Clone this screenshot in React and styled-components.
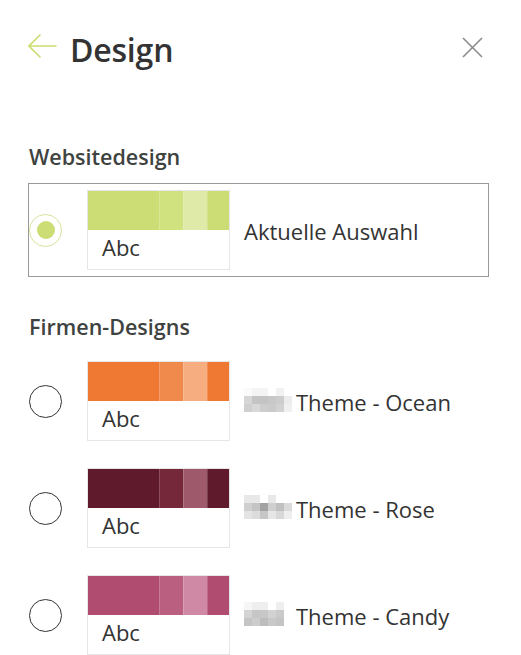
import React from "react";
import styled, { createGlobalStyle } from "styled-components";

const GlobalStyle = createGlobalStyle`
    body {
        margin: 0;
        background: #fff;
        font-family: "Open Sans", "Noto Sans", sans-serif;
        color: #333;
    }
`;

const Panel = styled.div`
    width: 521px;
    height: 655px;
    overflow: hidden;
    padding: 0 32px 0 28px;
    box-sizing: border-box;
`;

const Header = styled.div`
    display: flex;
    align-items: center;
    height: 102px;
    padding-bottom: 4px;
    box-sizing: border-box;
`;

const IconButton = styled.button`
    border: none;
    background: none;
    padding: 0;
    display: flex;
    cursor: pointer;
    margin-bottom: ${(p) => p.$lift || 0}px;
    margin-right: ${(p) => p.$inset || 0}px;
`;

const Title = styled.h1`
    flex: 1;
    margin: 0 0 0 13px;
    font-size: 32px;
    font-weight: 600;
    color: #333;
    letter-spacing: -0.2px;
`;

const SectionLabel = styled.h2`
    margin: 0 0 ${(p) => p.$gap}px 1px;
    font-size: 21.5px;
    font-weight: 600;
    color: #3f433f;
    line-height: 28px;
`;

const Section = styled.section`
    margin-top: ${(p) => p.$top}px;
`;

const List = styled.div`
    display: flex;
    flex-direction: column;
    gap: 13px;
`;

const Row = styled.div`
    display: flex;
    align-items: center;
    height: 94px;
    box-sizing: border-box;
    border: 1px solid ${(p) => (p.$selected ? "#999" : "transparent")};
`;

const Radio = styled.span`
    width: 33px;
    height: 33px;
    box-sizing: border-box;
    border-radius: 50%;
    border: 1px solid ${(p) => (p.$checked ? "#d5e39b" : "#333")};
    display: flex;
    align-items: center;
    justify-content: center;
    flex-shrink: 0;

    &::after {
        content: "";
        display: ${(p) => (p.$checked ? "block" : "none")};
        width: 18px;
        height: 18px;
        border-radius: 50%;
        background: #cbdd74;
    }
`;

const Thumb = styled.div`
    margin-left: 25px;
    width: 143px;
    height: 80px;
    box-sizing: border-box;
    border: 1px solid #e6e6e6;
    display: flex;
    flex-direction: column;
    flex-shrink: 0;
`;

const Band = styled.div`
    display: grid;
    grid-template-columns: 71px 24px 24px 1fr;
    height: 39px;
`;

const Swatch = styled.div`
    background: ${(p) => p.$color};
    & + & {
        border-left: 1px solid rgba(255, 255, 255, 0.18);
    }
`;

const Abc = styled.div`
    padding: 2px 0 0 14px;
    font-size: 22px;
    color: #333;
    line-height: 30px;
`;

const Name = styled.div`
    margin-left: 14px;
    padding-top: 1px;
    display: flex;
    align-items: center;
    font-size: 22px;
    color: #333;
    white-space: nowrap;
`;

const Mosaic = styled.span`
    display: grid;
    grid-template-columns: repeat(6, 8px);
    grid-auto-rows: 8px;
    margin-right: 4px;
    margin-top: -4px;
`;

const Cell = styled.span`
    background: ${(p) => p.$shade};
`;

const themes = [
    {
        name: "Theme - Ocean",
        colors: ["#ef7932", "#f08a4c", "#f6ad80", "#ef7932"],
        blur: [
            "#fafafa", "#f4f4f4", "#f4f4f4", "#fff", "#f2f2f2", "#fff",
            "#d6d6d6", "#c4c4c4", "#c4c4c4", "#c8c8c8", "#cdcdcd", "#ececec",
            "#cfcfcf", "#d8d8d8", "#cdcdcd", "#cbcbcb", "#d2d2d2", "#f0f0f0",
        ],
    },
    {
        name: "Theme - Rose",
        colors: ["#5f1a2b", "#74283a", "#9e5a6a", "#5f1a2b"],
        blur: [
            "#e8e8e8", "#e8e8e8", "#fff", "#e8e8e8", "#fff", "#fff",
            "#cfcfcf", "#c4c4c4", "#a2a2a2", "#cfcfcf", "#c0c0c0", "#dadada",
            "#e4e4e4", "#dcdcdc", "#c6c6c6", "#e6e6e6", "#d8d8d8", "#eeeeee",
        ],
    },
    {
        name: "Theme - Candy",
        colors: ["#b04c70", "#bb5f80", "#d089a5", "#b04c70"],
        blur: [
            "#f6f6f6", "#eeeeee", "#eeeeee", "#fff", "#eeeeee", "#fff",
            "#d4d4d4", "#c6c6c6", "#c8c8c8", "#d2d2d2", "#cacaca", "#fff",
            "#c4c4c4", "#cdcdcd", "#bdbdbd", "#c8c8c8", "#c4c4c4", "#fff",
        ],
    },
];

function ThemeThumb({ colors }) {
    return (
        <Thumb>
            <Band>
                {colors.map((c, i) => (
                    <Swatch key={i} $color={c} />
                ))}
            </Band>
            <Abc>Abc</Abc>
        </Thumb>
    );
}

function App() {
    return (
        <Panel>
            <GlobalStyle />
            <Header>
                <IconButton aria-label="Zurück" $lift={6}>
                    <svg width="29" height="26" viewBox="0 0 29 26">
                        <path
                            d="M12.5 1.5 L1 13 L12.5 24.5 M1 13 H28.5"
                            fill="none"
                            stroke="#c9de72"
                            strokeWidth="1.6"
                        />
                    </svg>
                </IconButton>
                <Title>Design</Title>
                <IconButton aria-label="Schließen" $lift={3} $inset={6}>
                    <svg width="21" height="21" viewBox="0 0 21 21">
                        <path
                            d="M1 1 L20 20 M20 1 L1 20"
                            fill="none"
                            stroke="#8a8a8a"
                            strokeWidth="1.6"
                        />
                    </svg>
                </IconButton>
            </Header>

            <Section $top={41}>
                <SectionLabel $gap={12}>Websitedesign</SectionLabel>
                <Row $selected>
                    <Radio $checked />
                    <ThemeThumb colors={["#cbdd74", "#d0e17f", "#e0eaa8", "#cbdd74"]} />
                    <Name>Aktuelle Auswahl</Name>
                </Row>
            </Section>

            <Section $top={36}>
                <SectionLabel $gap={13}>Firmen-Designs</SectionLabel>
                <List>
                    {themes.map((t) => (
                        <Row key={t.name}>
                            <Radio />
                            <ThemeThumb colors={t.colors} />
                            <Name>
                                <Mosaic>
                                    {t.blur.map((s, i) => (
                                        <Cell key={i} $shade={s} />
                                    ))}
                                </Mosaic>
                                {t.name}
                            </Name>
                        </Row>
                    ))}
                </List>
            </Section>
        </Panel>
    );
}

export default App;
